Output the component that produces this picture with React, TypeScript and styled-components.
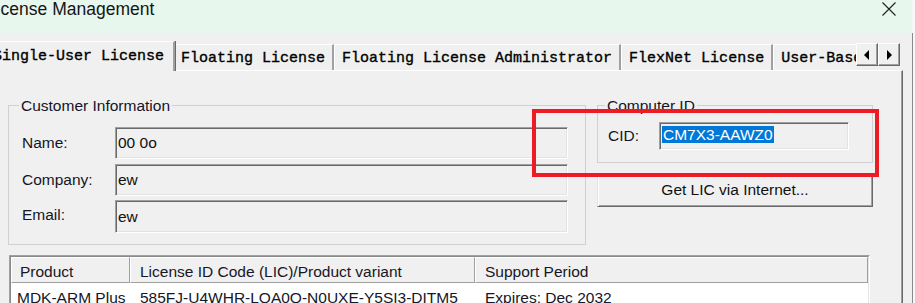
import React from "react";
import styled, { createGlobalStyle } from "styled-components";

const GlobalStyle = createGlobalStyle`
  html, body {
    margin: 0;
    padding: 0;
    background: #f7f7f7;
  }
  body {
    font-family: "Liberation Sans", Arial, sans-serif;
  }
`;

// data
const tabs = [
  "Single-User License",
  "Floating License",
  "Floating License Administrator",
  "FlexNet License",
  "User-Based License",
];

const products = [
  {
    product: "MDK-ARM Plus",
    lic: "585FJ-U4WHR-LQA0Q-N0UXE-Y5SI3-DITM5",
    support: "Expires: Dec 2032",
  },
];

export default function App() {
  return (
    <Screen>
      <GlobalStyle />
      <Window>
        <TitleBar>
          <TitleText>License Management</TitleText>
          <CloseButton>
            <svg width="14" height="14" viewBox="0 0 14 14">
              <path d="M0.5 0.5 L13.5 13.5 M13.5 0.5 L0.5 13.5" stroke="#1e1e1e" strokeWidth="1.1" fill="none" />
            </svg>
          </CloseButton>
        </TitleBar>

        <Body>
          <TabStrip>
            <TabViewport>
              {tabs.map((t, i) => (
                <Tab key={t} $active={i === 0} $first={i === 0} $afterActive={i === 1}>
                  {t}
                </Tab>
              ))}
            </TabViewport>
            <ScrollButtons>
              <ScrollButton>
                <svg width="6" height="10" viewBox="0 0 6 10">
                  <polygon points="5,0 5,10 0,5" fill="#000" />
                </svg>
              </ScrollButton>
              <ScrollButton>
                <svg width="6" height="10" viewBox="0 0 6 10">
                  <polygon points="1,0 1,10 6,5" fill="#000" />
                </svg>
              </ScrollButton>
            </ScrollButtons>
          </TabStrip>

          <Panel>
            <TopSection>
              <GroupBox $width={578} $pad="13px 17px 11px 13px">
                <Legend>Customer Information</Legend>
                <FormGrid $labelWidth={93} $gap={4.5}>
                  <Label>Name:</Label>
                  <Field $height={32}>00 0o</Field>
                  <Label>Company:</Label>
                  <Field $height={32}>ew</Field>
                  <Label $raise>Email:</Label>
                  <Field $height={33}>ew</Field>
                </FormGrid>
              </GroupBox>

              <RightColumn>
                <GroupBox $width={276} $pad="8px 23px 12px 10px">
                  <Legend>Computer ID</Legend>
                  <FormGrid $labelWidth={51} $gap={0}>
                    <Label>CID:</Label>
                    <Field $height={28}>
                      <Selected>CM7X3-AAWZ0</Selected>
                    </Field>
                  </FormGrid>
                </GroupBox>
                <Button>Get LIC via Internet...</Button>
              </RightColumn>
            </TopSection>

            <ListFrame>
              <ListInner>
                <ListRow>
                  <HeaderCell>Product</HeaderCell>
                  <HeaderCell>License ID Code (LIC)/Product variant</HeaderCell>
                  <HeaderCell>Support Period</HeaderCell>
                </ListRow>
                {products.map((p) => (
                  <ListRow key={p.lic}>
                    <Cell $first>{p.product}</Cell>
                    <Cell>{p.lic}</Cell>
                    <Cell>{p.support}</Cell>
                  </ListRow>
                ))}
              </ListInner>
            </ListFrame>
          </Panel>
        </Body>
      </Window>

      <Annotation />
    </Screen>
  );
}

// styled Components
const Screen = styled.div`
  position: relative;
  width: 915px;
  height: 303px;
  overflow: hidden;
  background: #f7f7f7;
`;

const Window = styled.div`
  width: 913px;
  height: 100%;
  display: flex;
  flex-direction: column;
`;

const TitleBar = styled.div`
  width: 912px;
  height: 33px;
  flex-shrink: 0;
  display: flex;
  justify-content: space-between;
  align-items: flex-start;
  background: #e7f7ee;
`;

const TitleText = styled.span`
  margin-left: -13px;
  font-size: 17.5px;
  line-height: 18px;
  color: #141414;
  white-space: nowrap;
`;

const CloseButton = styled.div`
  margin: 2px 16px 0 0;
  width: 14px;
  height: 14px;
  display: flex;
`;

const Body = styled.div`
  flex: 1;
  min-height: 0;
  display: flex;
  flex-direction: column;
  background: #f0f0f0;
  border-right: 1px solid #8a8a8a;
  padding-right: 9px;
`;

const TabStrip = styled.div`
  height: 37px;
  flex-shrink: 0;
  display: flex;
  align-items: flex-end;
`;

const TabViewport = styled.div`
  flex: 1;
  min-width: 0;
  height: 100%;
  display: flex;
  align-items: flex-end;
  overflow-x: clip;
  overflow-y: visible;
`;

const Tab = styled.div<{ $active?: boolean; $first?: boolean; $afterActive?: boolean }>`
  flex-shrink: 0;
  box-sizing: border-box;
  height: ${(p) => (p.$active ? "30px" : "26px")};
  margin-bottom: ${(p) => (p.$active ? "-1px" : "0")};
  margin-left: ${(p) => (p.$first ? "-18px" : p.$afterActive ? "-2px" : "0")};
  padding: ${(p) => (p.$active ? "0 9px 1px 10px" : "1px 7px 0 7px")};
  display: flex;
  align-items: center;
  position: ${(p) => (p.$active ? "relative" : "static")};
  z-index: ${(p) => (p.$active ? 1 : "auto")};
  background: #f0f0f0;
  border-top: 1px solid #fff;
  border-left: 1px solid #fff;
  border-right: 2px solid #a0a0a0;
  box-shadow: 1px 0 0 #696969;
  font-family: "Liberation Mono", "Courier New", monospace;
  font-size: 15px;
  color: #000;
  -webkit-text-stroke: 0.35px #000;
  white-space: nowrap;
`;

const ScrollButtons = styled.div`
  flex-shrink: 0;
  display: flex;
  margin: 0 3px 4px 0;
`;

const ScrollButton = styled.div`
  box-sizing: border-box;
  width: 22px;
  height: 23px;
  display: flex;
  align-items: center;
  justify-content: center;
  background: #f0f0f0;
  border-style: solid;
  border-width: 1px;
  border-color: #fff #696969 #696969 #fff;
  box-shadow: inset -1px -1px #a0a0a0;
`;

const Panel = styled.div`
  flex: 1;
  min-height: 0;
  display: flex;
  flex-direction: column;
  gap: 10px;
  padding: 26px 0 0 8px;
  border-top: 1px solid #fff;
  border-right: 1px solid #696969;
  box-shadow: inset -1px 0 #a0a0a0;
`;

const TopSection = styled.div`
  display: flex;
  align-items: flex-start;
  gap: 11px;
`;

const RightColumn = styled.div`
  width: 276px;
  display: flex;
  flex-direction: column;
  gap: 10px;
`;

const GroupBox = styled.fieldset<{ $width: number; $pad: string }>`
  box-sizing: border-box;
  width: ${(p) => p.$width}px;
  min-width: 0;
  margin: 0;
  padding: ${(p) => p.$pad};
  border: 1px solid #d0d0d0;
`;

const Legend = styled.legend`
  margin-left: -3px;
  padding: 0 2px;
  font-size: 15.5px;
  line-height: 17px;
  color: #141428;
`;

const FormGrid = styled.div<{ $labelWidth: number; $gap: number }>`
  display: grid;
  grid-template-columns: ${(p) => p.$labelWidth}px 1fr;
  row-gap: ${(p) => p.$gap}px;
  align-items: center;
`;

const Label = styled.span<{ $raise?: boolean }>`
  margin-bottom: ${(p) => (p.$raise ? "4px" : "0")};
  font-size: 15.5px;
  color: #161626;
  white-space: nowrap;
`;

const Field = styled.div<{ $height: number }>`
  box-sizing: border-box;
  height: ${(p) => p.$height}px;
  display: flex;
  align-items: center;
  padding-left: 2px;
  border-style: solid;
  border-width: 1px;
  border-color: #a0a0a0 #fff #fff #a0a0a0;
  box-shadow: inset 1px 1px #696969, inset -1px -1px #e3e3e3;
  font-size: 15.5px;
  color: #111;
  white-space: nowrap;
  overflow: hidden;
`;

const Selected = styled.span`
  background: #0078d7;
  color: #fff;
  line-height: 17px;
  padding: 0 1px;
  margin-top: -3px;
`;

const Button = styled.div`
  box-sizing: border-box;
  height: 34px;
  display: flex;
  align-items: center;
  justify-content: center;
  background: #f0f0f0;
  border-style: solid;
  border-width: 1px;
  border-color: #e3e3e3 #696969 #696969 #e3e3e3;
  box-shadow: inset 1px 1px #fff, inset -1px -1px #a0a0a0;
  font-size: 15.5px;
  color: #111;
`;

const ListFrame = styled.div`
  width: 861px;
  margin-left: 1px;
  box-sizing: border-box;
  border-style: solid;
  border-width: 1px;
  border-color: #a0a0a0 #fff #fff #a0a0a0;
`;

const ListInner = styled.div`
  border-style: solid;
  border-width: 1px;
  border-color: #8a8a8a #e3e3e3 #e3e3e3 #8a8a8a;
  background: #fff;
`;

const ListRow = styled.div`
  display: grid;
  grid-template-columns: 119px 345px 1fr;
`;

const HeaderCell = styled.div`
  box-sizing: border-box;
  height: 26px;
  display: flex;
  align-items: center;
  padding: 3px 0 0 8px;
  background: #f0f0f0;
  border-style: solid;
  border-width: 1px;
  border-color: #fff #a0a0a0 #a0a0a0 #fff;
  font-size: 15.5px;
  color: #161626;
  white-space: nowrap;
  overflow: hidden;

  & + & {
    padding-left: 9px;
  }
`;

const Cell = styled.div<{ $first?: boolean }>`
  box-sizing: border-box;
  height: 26px;
  display: flex;
  align-items: center;
  padding: 3px 0 0 ${(p) => (p.$first ? "6px" : "10px")};
  font-size: 15.5px;
  color: #161626;
  white-space: nowrap;
  overflow: hidden;
`;

const Annotation = styled.div`
  position: absolute;
  left: 532px;
  top: 109px;
  width: 347px;
  height: 68px;
  box-sizing: border-box;
  border: 4px solid #ed1c24;
  pointer-events: none;
`;
